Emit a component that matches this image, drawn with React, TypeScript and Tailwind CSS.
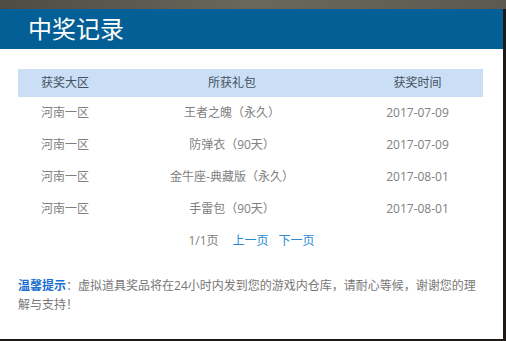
const ROWS = [
  { zone: '河南一区', gift: '王者之魄（永久）', date: '2017-07-09' },
  { zone: '河南一区', gift: '防弹衣（90天）', date: '2017-07-09' },
  { zone: '河南一区', gift: '金牛座-典藏版（永久）', date: '2017-08-01' },
  { zone: '河南一区', gift: '手雷包（90天）', date: '2017-08-01' },
]

export default function App() {
  return (
    <div className="w-[506px] h-[341px] bg-[#1c1916] flex flex-col overflow-hidden font-['Open_Sans','Noto_Sans_CJK_SC',sans-serif]">
      <div className="h-[9px] shrink-0 bg-gradient-to-r from-[#4e4c44] via-[#6a675c] to-[#5c5a50]" />
      <div className="flex">
        <div className="w-[503px] h-[330px] bg-white flex flex-col">
          <div className="h-10 bg-[#035f95] flex items-center pl-[28px]">
            <h1 className="text-[24px] leading-none text-white">中奖记录</h1>
          </div>
          <div className="px-[18px] pt-5">
            <table className="w-[465px] text-[12px] table-fixed border-collapse">
              <thead>
                <tr className="bg-[#cadff5] text-[#44505f] h-[28px]">
                  <th className="w-[94px] font-normal">获奖大区</th>
                  <th className="w-[240px] font-normal">所获礼包</th>
                  <th className="font-normal">获奖时间</th>
                </tr>
              </thead>
              <tbody className="text-[#808080]">
                {ROWS.map((r, i) => (
                  <tr key={i} className="h-8 text-center">
                    <td>{r.zone}</td>
                    <td>{r.gift}</td>
                    <td>{r.date}</td>
                  </tr>
                ))}
              </tbody>
            </table>
            <div className="flex justify-center items-center text-[12px] mt-[5px] h-[22px]">
              <span className="text-[#808080] mr-[14px]">1/1页</span>
              <span className="text-[#2b8ad0] mr-[10px]">上一页</span>
              <span className="text-[#2b8ad0]">下一页</span>
            </div>
            <p className="mt-[24px] text-[12px] leading-[19px] text-[#777777]">
              <span className="text-[#1a70d0] font-bold">温馨提示</span>：虚拟道具奖品将在24小时内发到您的游戏内仓库，请耐心等候，谢谢您的理解与支持！
            </p>
          </div>
        </div>
      </div>
    </div>
  )
}
